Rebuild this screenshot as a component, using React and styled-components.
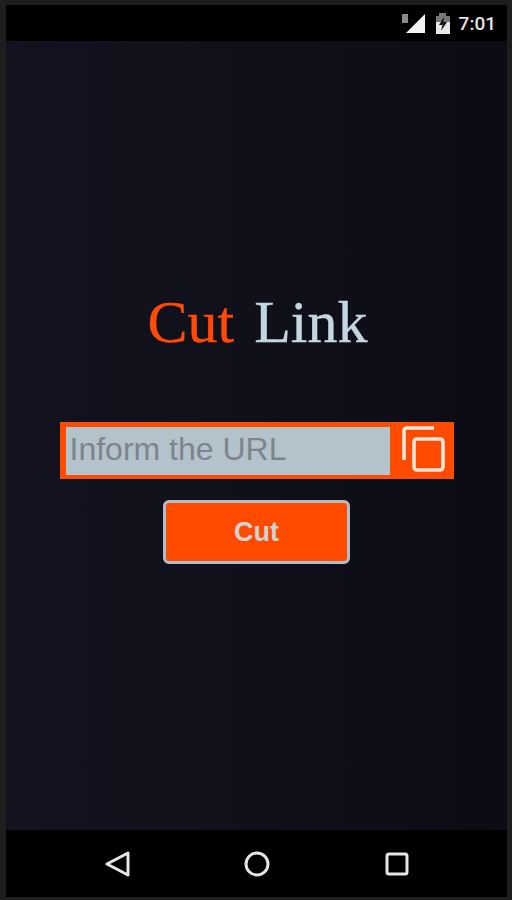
import styled, { createGlobalStyle } from "styled-components";

const Global = createGlobalStyle`
  html, body {
    margin: 0;
    padding: 0;
    background: #1e1e1f;
  }
`;

const Screen = styled.div`
  width: 512px;
  height: 900px;
  box-sizing: border-box;
  padding: 5px 5px 3px 6px;
  display: flex;
  flex-direction: column;
`;

const StatusBar = styled.div`
  height: 36px;
  flex: none;
  background: #000;
  display: flex;
  align-items: center;
  justify-content: flex-end;
  padding-right: 11px;
  color: #e4e4e4;
  font-family: "Roboto", sans-serif;
  font-size: 19px;
  font-weight: 500;
`;

const SignalIcon = styled.svg`
  width: 24px;
  height: 22px;
`;

const BatteryIcon = styled.svg`
  width: 14px;
  height: 22px;
  margin-left: 10px;
`;

const Clock = styled.span`
  margin-left: 9px;
`;

const Main = styled.main`
  flex: 1;
  background: linear-gradient(90deg, #12131e, #0f101a 50%, #0b0c14);
  display: flex;
  flex-direction: column;
  align-items: center;
  padding-top: 248px;
`;

const Title = styled.h1`
  margin: 0 0 0 2px;
  height: 66px;
  font-family: "Liberation Serif", serif;
  font-size: 60px;
  line-height: 66px;
  font-weight: 400;
  display: flex;
  gap: 20px;
  -webkit-text-stroke: 0.4px currentColor;
`;

const Word = styled.span`
  color: ${(p) => p.$color};
`;

const UrlRow = styled.div`
  margin-top: 67px;
  width: 394px;
  height: 57px;
  box-sizing: border-box;
  background: #ff4b00;
  padding: 5px 4px 4px 6px;
  display: flex;
  align-items: stretch;
  gap: 12px;
`;

const UrlField = styled.div`
  width: 324px;
  flex: none;
  background: #b4c2cc;
  color: #7d858c;
  font-family: "Liberation Sans", sans-serif;
  font-size: 32px;
  line-height: 45px;
  padding-left: 4px;
  box-sizing: border-box;
`;

const CopyIcon = styled.svg`
  width: 46px;
  height: 50px;
  margin-top: -1px;
  flex: none;
`;

const CutButton = styled.button`
  margin-top: 21px;
  width: 187px;
  height: 64px;
  box-sizing: border-box;
  background: #ff4b00;
  border: 3px solid #b4bcc4;
  border-radius: 6px;
  color: #d0d2d2;
  font-family: "Liberation Sans", sans-serif;
  font-size: 27px;
  font-weight: 700;
  padding: 0;
`;

const NavBar = styled.nav`
  height: 67px;
  flex: none;
  background: #000;
  display: grid;
  grid-template-columns: 26px 26px 26px;
  justify-content: center;
  column-gap: 114px;
  align-items: center;
`;

const NavIcon = styled.svg`
  width: 26px;
  height: 26px;
  fill: none;
  stroke: #e6e6e6;
  stroke-width: 3;
  stroke-linejoin: round;
`;

export default function App() {
  return (
    <Screen>
      <Global />
      <StatusBar>
        <SignalIcon viewBox="0 0 24 22">
          <path d="M4 21 L23 2 V21 Z" fill="#f4f4f4" />
          <rect x="0" y="2" width="6" height="9" fill="#8a8a8a" />
        </SignalIcon>
        <BatteryIcon viewBox="0 0 14 22">
          <path d="M0 4 H3 V1 H10 V4 H14 V22 H0 Z" fill="#e8e8e8" />
          <path d="M0 4 H3 V1 H10 V4 H14 V10 H0 Z" fill="#777" />
          <path d="M8 5 L3 13 H6.5 L5 19 L11 10 H7.5 Z" fill="#111" />
        </BatteryIcon>
        <Clock>7:01</Clock>
      </StatusBar>
      <Main>
        <Title>
          <Word $color="#ff4a0a">Cut</Word>
          <Word $color="#c3d6e2">Link</Word>
        </Title>
        <UrlRow>
          <UrlField>Inform the URL</UrlField>
          <CopyIcon viewBox="0 0 46 50" fill="none" stroke="#fbe6dc" strokeWidth="3.6">
            <path d="M2 34 V5 Q2 2 5 2 H32" />
            <rect x="12" y="13" width="29" height="31" rx="3" />
          </CopyIcon>
        </UrlRow>
        <CutButton>Cut</CutButton>
      </Main>
      <NavBar>
        <NavIcon viewBox="0 0 26 26">
          <path d="M3 13 L24 2 V24 Z" />
        </NavIcon>
        <NavIcon viewBox="0 0 26 26">
          <circle cx="13" cy="13" r="11" />
        </NavIcon>
        <NavIcon viewBox="0 0 26 26">
          <rect x="3" y="3" width="20" height="20" rx="2" />
        </NavIcon>
      </NavBar>
    </Screen>
  );
}
